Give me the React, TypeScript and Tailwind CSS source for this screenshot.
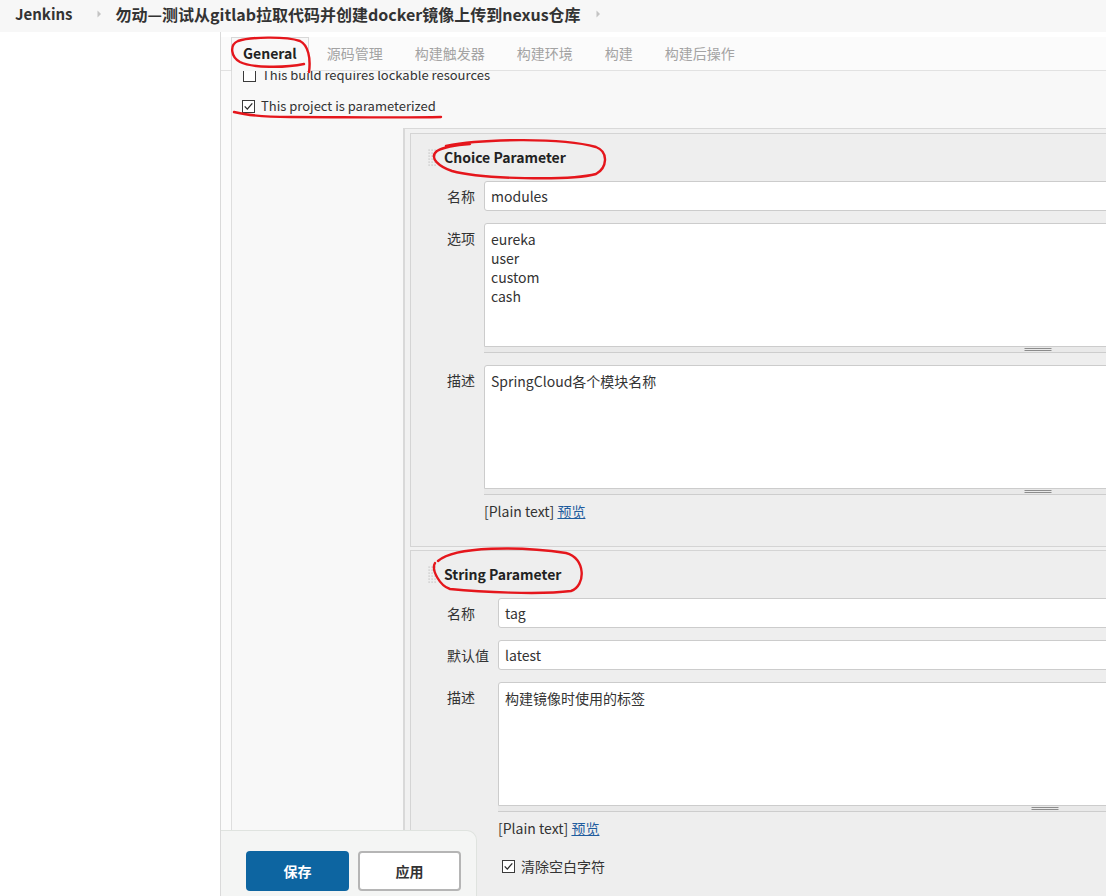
import React from "react";

function Check({ checked }: { checked: boolean }) {
  return (
    <svg width="13" height="13" viewBox="0 0 13 13" className="shrink-0">
      <rect x="0.5" y="0.5" width="12" height="12" fill="#fff" stroke="#3a3a3a" />
      {checked && (
        <path d="M2.7 6.4 L5.3 9.1 L10.3 3.4" fill="none" stroke="#2a2a2a" strokeWidth="1.3" />
      )}
    </svg>
  );
}

function Chevron() {
  return (
    <svg width="5" height="8" viewBox="0 0 5 8">
      <path d="M0.5 0.5 L4 4 L0.5 7.5 Z" fill="#c4c4c4" />
    </svg>
  );
}

function Dots() {
  const dots: React.ReactNode[] = [];
  for (let r = 0; r < 6; r++)
    for (let c = 0; c < 3; c++)
      dots.push(<rect key={`${r}-${c}`} x={c * 3 + 0.5} y={r * 3 + 0.5} width="1.2" height="1.2" fill="#bdbdbd" />);
  return (
    <svg width="9" height="18" viewBox="0 0 9 18" className="shrink-0">
      {dots}
    </svg>
  );
}

function Grip() {
  return (
    <div className="relative h-[6px] border-b border-[#cdcdcd] bg-[#e9e9e9]">
      <div className="absolute left-1/2 top-[1px] h-[3px] w-[27px] -translate-x-1/2 border-y border-[#8c8c8c]" />
    </div>
  );
}

function Label({ children }: { children: React.ReactNode }) {
  return <div className="pt-[6px] text-[14px] leading-[18px] text-[#333]">{children}</div>;
}

function Input({ value }: { value: string }) {
  return (
    <div className="h-[30px] rounded-[3px] border border-[#cccccc] bg-white pl-[6px] text-[14px] leading-[28px] text-[#333]">
      {value}
    </div>
  );
}

function TextArea({ lines }: { lines: string[] }) {
  return (
    <div>
      <div className="h-[124px] rounded-t-[3px] border border-[#cccccc] bg-white px-[6px] pt-[6px] text-[14px] leading-[19px] text-[#333]">
        {lines.map((l) => (
          <div key={l}>{l}</div>
        ))}
      </div>
      <Grip />
    </div>
  );
}

function PlainText() {
  return (
    <div className="mt-[7px] text-[14px] leading-[18px] text-[#333]">
      [Plain text] <span className="text-[#1f5c9e] underline">预览</span>
    </div>
  );
}

function Panel({ title, children, className }: { title: string; children: React.ReactNode; className?: string }) {
  return (
    <div className={`w-[1230px] border border-[#d4d4d4] bg-[#eeeeee] ${className ?? ""}`}>
      <div className="flex h-[47px] items-center pl-[17px]">
        <Dots />
        <span className="ml-[7px] text-[14px] font-bold text-[#222]">{title}</span>
      </div>
      <div className="ml-[36px] grid w-[1145px] grid-cols-[auto_1fr] items-start gap-x-[9px] gap-y-[12px]">
        {children}
      </div>
    </div>
  );
}

const tab = "flex h-[34px] items-start px-[16px] pt-[7px] text-[14px] leading-[18px] text-[#a3a3a3]";

export default function App() {
  return (
    <div className="relative h-[896px] w-[1106px] overflow-hidden bg-white font-['Noto_Sans_CJK_SC','Noto_Sans',sans-serif] text-[#333]">
      <div className="w-[1700px]">
        {/* header */}
        <header className="flex h-[32px] items-center bg-[#f7f7f7] pb-[4px] pl-[15px]">
          <span className="text-[15px] font-bold text-[#333]">Jenkins</span>
          <span className="ml-[24px] flex items-center">
            <Chevron />
          </span>
          <span className="ml-[14px] text-[16px] font-bold text-[#333]">
            勿动—测试从gitlab拉取代码并创建docker镜像上传到nexus仓库
          </span>
          <span className="ml-[15px] flex items-center">
            <Chevron />
          </span>
        </header>

        <div className="flex">
          <aside className="h-[864px] w-[221px] shrink-0 border-r border-[#dadada] bg-white" />
          <main className="flex-1 bg-[#fbfbfb]">
            <div className="h-[5px] bg-white" />
            {/* tabs */}
            <div className="flex h-[34px] items-start border-b border-[#e2e2e2] pl-[10px]">
              <div className="-mb-px flex h-[34px] items-start border border-b-0 border-[#d8d8d8] bg-[#f8f8f8] px-[11px] pt-[6px] text-[14px] font-bold leading-[18px] text-[#222]">
                General
              </div>
              <div className={`ml-[2px] ${tab}`}>源码管理</div>
              <div className={tab}>构建触发器</div>
              <div className={tab}>构建环境</div>
              <div className={tab}>构建</div>
              <div className={tab}>构建后操作</div>
            </div>

            {/* content */}
            <div className="ml-[10px] h-[830px] overflow-hidden border-l border-[#dedede] bg-[#f8f8f8]">
              <div className="-mt-[7px] flex h-[22px] items-center pl-[11px]">
                <Check checked={false} />
                <span className="ml-[6px] text-[13px] text-[#333]">This build requires lockable resources</span>
              </div>
              <div className="mt-[9px] flex h-[22px] items-center pl-[10px]">
                <Check checked />
                <span className="ml-[6px] text-[13px] text-[#333]">This project is parameterized</span>
              </div>

              <div className="ml-[171px] mt-[11px] h-[800px] border-l-2 border-t border-[#d9d9d9] bg-[#f1f1f1] pl-[5px] pt-[4px]">
                <Panel title="Choice Parameter" className="pb-[26px]">
                  <Label>名称</Label>
                  <Input value="modules" />
                  <Label>选项</Label>
                  <TextArea lines={["eureka", "user", "custom", "cash"]} />
                  <Label>描述</Label>
                  <div>
                    <TextArea lines={["SpringCloud各个模块名称"]} />
                    <PlainText />
                  </div>
                </Panel>

                <Panel title="String Parameter" className="mt-[3px] pb-[40px]">
                  <Label>名称</Label>
                  <Input value="tag" />
                  <Label>默认值</Label>
                  <Input value="latest" />
                  <Label>描述</Label>
                  <div>
                    <TextArea lines={["构建镜像时使用的标签"]} />
                    <PlainText />
                    <div className="mt-[20px] flex h-[18px] items-center pl-[4px]">
                      <Check checked />
                      <span className="ml-[6px] text-[14px] text-[#333]">清除空白字符</span>
                    </div>
                  </div>
                </Panel>
              </div>
            </div>
          </main>
        </div>
      </div>

      {/* bottom sticky save bar */}
      <div className="absolute left-[221px] top-[830px] flex h-[66px] w-[256px] gap-[9px] rounded-tr-[10px] border-r border-t border-[#dfe3df] bg-[#f4f5f4] pl-[25px] pt-[20px]">
        <button className="h-[40px] w-[103px] rounded-[4px] bg-[#0d65a1] text-[14px] font-bold text-white">保存</button>
        <button className="h-[40px] w-[103px] rounded-[4px] border-2 border-[#b5b5b5] bg-white text-[14px] font-bold text-[#333]">应用</button>
      </div>

      {/* red annotations */}
      <svg className="pointer-events-none absolute left-0 top-0" width="1106" height="896" viewBox="0 0 1106 896">
        <g fill="none" stroke="#e5161c" strokeWidth="2.4" strokeLinecap="round" strokeLinejoin="round">
          <path d="M309 72 C311 58 308 45 300 41 C285 36 250 37 238 41 C229 45 231 57 240 62 C252 68 285 68 304 64" />
          <path d="M234 112 C250 116 265 117 290 117 C340 117 400 118 441 117" />
          <path d="M446 146 C480 139 560 137 596 147 C609 152 607 168 596 174 C570 181 480 179 452 171 C440 167 428 158 437 151 C444 147 455 145 470 144" />
          <path d="M438 561 C455 546 520 546 566 553 C586 558 586 586 571 591 C540 595 480 592 450 589 C440 586 431 570 435 563" />
        </g>
      </svg>
    </div>
  );
}
